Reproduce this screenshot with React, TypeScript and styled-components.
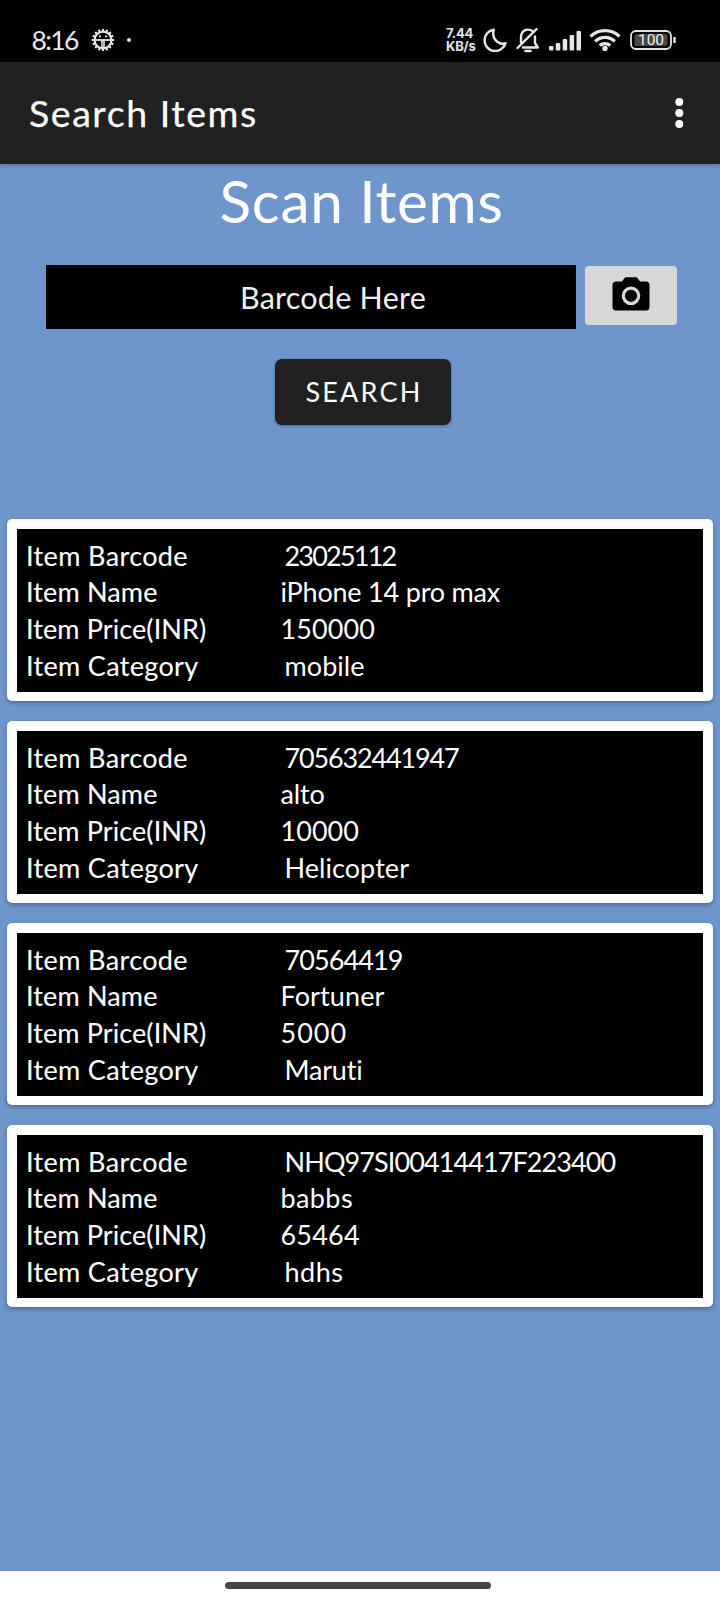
import React from 'react';
import styled, { createGlobalStyle } from 'styled-components';

const Global = createGlobalStyle`
  * { box-sizing: border-box; }
  body { margin: 0; background: #6e96cb; font-family: Lato, "Open Sans", sans-serif; }
`;

const Screen = styled.main`
  width: 720px;
  height: 1600px;
  display: flex;
  flex-direction: column;
  background: #6e96cb;
  overflow: hidden;
`;

const StatusBar = styled.header`
  height: 62px;
  flex: none;
  display: flex;
  align-items: center;
  padding: 18px 43px 0 31.5px;
  background: #000;
  color: #e6e6e6;
`;

const Clock = styled.time`
  font-size: 26.5px;
  line-height: 32px;
  letter-spacing: -1.6px;
  width: 59px;
`;

const NoticeDot = styled.span`
  width: 4px;
  height: 4px;
  margin-left: 12.5px;
  border-radius: 50%;
  background: #e6e6e6;
`;

const StatusIcons = styled.div`
  margin-left: auto;
  display: flex;
  align-items: center;
`;

const NetSpeed = styled.div`
  width: 36px;
  display: flex;
  flex-direction: column;
  font: 700 13px/13px Inter, sans-serif;
  letter-spacing: -0.2px;
`;

const Glyph = styled.svg<{ $gap?: number }>`
  display: block;
  flex: none;
  margin-left: ${(p) => p.$gap ?? 0}px;
`;

const AppBar = styled.div`
  height: 102px;
  flex: none;
  display: flex;
  align-items: center;
  justify-content: space-between;
  padding: 0 36px 0 29px;
  background: #212121;
  color: #fff;
  box-shadow: 0 1px 5px rgba(0, 0, 0, 0.3);
`;

const AppTitle = styled.h1`
  margin: 0;
  font-size: 37.5px;
  font-weight: 400;
  line-height: 48px;
  letter-spacing: 1.55px;
  -webkit-text-stroke: 0.25px currentColor;
`;

const Heading = styled.h2`
  margin: 6.5px 0 0;
  padding-left: 3px;
  height: 58px;
  text-align: center;
  color: #fff;
  font-size: 58.5px;
  font-weight: 400;
  line-height: 58px;
  letter-spacing: 0.7px;
`;

const ScanRow = styled.div`
  display: flex;
  gap: 8.5px;
  margin: 36.5px 0 0 46px;
`;

const BarcodeField = styled.div`
  width: 530px;
  height: 64px;
  padding-left: 44px;
  display: flex;
  align-items: center;
  justify-content: center;
  background: #000;
  color: #f1f1f1;
  font-size: 30.5px;
  letter-spacing: 0.25px;
`;

const CameraButton = styled.button`
  width: 92px;
  height: 59px;
  margin: 1px 0 0;
  padding: 0 0 4px;
  border: 0;
  border-radius: 4px;
  display: flex;
  align-items: center;
  justify-content: center;
  background: #d6d8d7;
`;

const SearchButton = styled.button`
  align-self: center;
  width: 176px;
  height: 66.5px;
  flex: none;
  margin: 29.5px 0 0 6px;
  padding: 0 0 0 2px;
  border: 0;
  border-radius: 7px;
  background: #212121;
  color: #fff;
  font: 400 27px Lato, sans-serif;
  letter-spacing: 2.2px;
  box-shadow: 0 1px 3px rgba(0, 0, 0, 0.35);
`;

const CardList = styled.ul`
  list-style: none;
  margin: 94px 7.5px 0 7px;
  padding: 0;
  display: flex;
  flex-direction: column;
  gap: 20px;
`;

const Card = styled.li`
  height: 182px;
  padding: 9.5px;
  border-radius: 5px;
  background: #fff;
  box-shadow: 0 2px 4px rgba(0, 0, 0, 0.3);
`;

const Details = styled.dl`
  margin: 0;
  height: 163px;
  padding: 9px 0 0 9.5px;
  display: grid;
  grid-template-columns: 254.5px 1fr;
  grid-auto-rows: 36.7px;
  background: #000;
  color: #fff;
  font-size: 27px;
  line-height: 36.7px;
  white-space: nowrap;
`;

const Label = styled.dt<{ $track: number }>`
  letter-spacing: ${(p) => p.$track}px;
  -webkit-text-stroke: 0.1px currentColor;
`;

const Value = styled.dd<{ $track: number; $inset: boolean }>`
  margin: 0;
  padding-left: ${(p) => (p.$inset ? 4 : 0)}px;
  letter-spacing: ${(p) => p.$track}px;
`;

const NavBar = styled.footer`
  height: 29.5px;
  flex: none;
  margin-top: auto;
  padding-top: 11.5px;
  display: flex;
  justify-content: center;
  background: #fff;
`;

const HomePill = styled.div`
  width: 266px;
  height: 7px;
  margin-right: 4px;
  border-radius: 4px;
  background: #464646;
`;

const fields = [
  { label: 'Item Barcode', track: 0.38, inset: true },
  { label: 'Item Name', track: 0.15, inset: false },
  { label: 'Item Price(INR)', track: 0.1, inset: false },
  { label: 'Item Category', track: 0.33, inset: true },
];

type Cell = [string, number];
const items: Cell[][] = [
  [['23025112', -1.8], ['iPhone 14 pro max', -0.2], ['150000', 0.09], ['mobile', 0.06]],
  [['705632441947', -1.16], ['alto', -0.1], ['10000', 0.04], ['Helicopter', 0.06]],
  [['70564419', -0.9], ['Fortuner', 0.1], ['5000', 1], ['Maruti', -0.2]],
  [['NHQ97SI00414417F223400', -0.91], ['babbs', 0.4], ['65464', 0.2], ['hdhs', 0.54]],
];

const teeth = Array.from({ length: 16 }, (_, i) => i * 22.5);

export default function App() {
  return (
    <Screen>
      <Global />
      <StatusBar>
        <Clock>8:16</Clock>
        <Glyph width="24" height="24" viewBox="0 0 24 24" fill="none" stroke="#e6e6e6">
          <circle cx="12" cy="12" r="8.4" strokeWidth="2.2" />
          {teeth.map((a) => (
            <path key={a} d="M12 4V.9" strokeWidth="2.2" transform={`rotate(${a} 12 12)`} />
          ))}
          <path d="M4 12h16" strokeWidth="1.8" />
          <path d="M12 12v8" strokeWidth="3.6" />
          <path d="M12 13.5v5" stroke="#777" strokeWidth="1" />
          <path d="M8 8.4h2M14 8.400h2" strokeWidth="1.600" />
        </Glyph>
        <NoticeDot />
        <StatusIcons>
          <NetSpeed>
            <span>7.44</span>
            <span>KB/s</span>
          </NetSpeed>
          <Glyph $gap={1} width="24" height="24" viewBox="0 0 24 24" fill="none" stroke="#e6e6e6" strokeWidth="2.5" strokeLinejoin="round">
            <path d="M10.800 1.700A10.700 10.700 0 1 0 22.500 15.200C15.500 17.500 8 10.800 10.800 1.700Z" />
          </Glyph>
          <Glyph $gap={9} width="24" height="26" viewBox="0 0 24 26" fill="none" stroke="#e6e6e6" strokeWidth="2.400" strokeLinecap="round" strokeLinejoin="round">
            <path d="M1.500 21 20.500 2.200M5 15.500V10.500C5 5.500 8 2.600 12 2.600c1.800 0 3.300.5 4.500 1.500M19 9.500V16l2.800 4.500H7" />
            <path d="M9.500 24h5" strokeWidth="2.600" />
          </Glyph>
          <Glyph $gap={9} width="33" height="21" viewBox="0 0 33 21" fill="#e6e6e6">
            <rect x="0" y="16" width="4.500" height="4.500" rx="1" />
            <rect x="6.800" y="13" width="4.500" height="7.500" rx="1" />
            <rect x="13.700" y="9" width="4.500" height="11.500" rx="1" />
            <rect x="20.600" y="5" width="4.500" height="15.500" rx="1" />
            <rect x="27.500" y="1" width="4.500" height="19.500" rx="1" />
          </Glyph>
          <Glyph $gap={7} width="32" height="24" viewBox="0 0 32 24" fill="none" stroke="#e6e6e6" strokeWidth="3.200">
            <path d="M1.500 8.500a21 21 0 0 1 29 0M6.200 13.300a14 14 0 0 1 19.600 0M10.800 17.600a7.600 7.600 0 0 1 10.400 0" />
            <circle cx="16" cy="20.400" r="2.700" fill="#e6e6e6" stroke="none" />
          </Glyph>
          <Glyph $gap={9} width="47" height="20" viewBox="0 0 47 20">
            <rect x="1" y="1" width="40" height="18" rx="5" fill="none" stroke="#e6e6e6" strokeWidth="1.800" />
            <rect x="4.500" y="4" width="33" height="12" rx="2" fill="#484848" />
            <path d="M44.500 7v6" stroke="#e6e6e6" strokeWidth="2.400" />
            <text x="21" y="15.300" textAnchor="middle" fontFamily="Roboto, sans-serif" fontSize="15.500" fill="#f0f0f0">100</text>
          </Glyph>
        </StatusIcons>
      </StatusBar>
      <AppBar>
        <AppTitle>Search Items</AppTitle>
        <Glyph width="10" height="30" viewBox="0 0 10 30" fill="#fff">
          <circle cx="5.300" cy="4" r="4" />
          <circle cx="5.300" cy="15" r="4" />
          <circle cx="5.300" cy="26" r="4" />
        </Glyph>
      </AppBar>
      <Heading>Scan Items</Heading>
      <ScanRow>
        <BarcodeField>Barcode Here</BarcodeField>
        <CameraButton aria-label="Scan barcode">
          <Glyph width="38" height="34" viewBox="0 0 38 34">
            <path d="M10 4.500 12.200 1.400Q13 .3 14.500.3h9q1.500 0 2.300 1.100L28 4.500h6q3.500 0 3.500 3.500v22q0 3.500-3.500 3.500H4Q.5 33.500.5 30V8Q.5 4.500 4 4.500Z" fill="#000" />
            <circle cx="19" cy="18.800" r="7.700" fill="none" stroke="#d6d8d7" strokeWidth="3.200" />
          </Glyph>
        </CameraButton>
      </ScanRow>
      <SearchButton>SEARCH</SearchButton>
      <CardList>
        {items.map((cells) => (
          <Card key={cells[0][0]}>
            <Details>
              {fields.map((f, i) => (
                <React.Fragment key={f.label}>
                  <Label $track={f.track}>{f.label}</Label>
                  <Value $track={cells[i][1]} $inset={f.inset}>{cells[i][0]}</Value>
                </React.Fragment>
              ))}
            </Details>
          </Card>
        ))}
      </CardList>
      <NavBar>
        <HomePill />
      </NavBar>
    </Screen>
  );
}
